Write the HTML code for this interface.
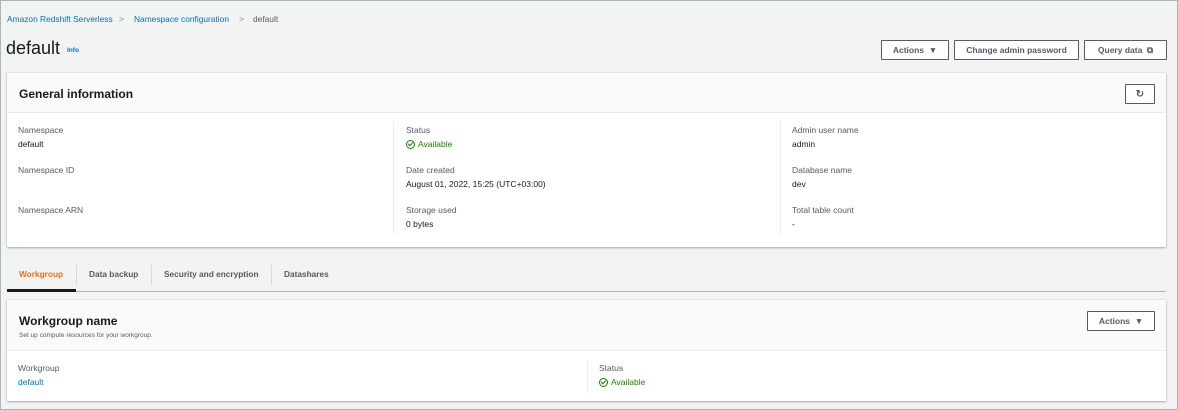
<!DOCTYPE html>
<html><head><style>
*{box-sizing:border-box;margin:0;padding:0}
body{width:1178px;height:410px;background:#f2f3f3;font-family:"Liberation Sans",sans-serif;color:#16191f;position:relative;overflow:hidden}
.frame{position:absolute;left:0;top:0;width:1178px;height:410px;border:1px solid #aab7b8;pointer-events:none}
.a{position:absolute}
.bc{font-size:8.4px;top:14px}
.link{color:#0073bb}
.btn{position:absolute;height:20px;border:1px solid #545b64;background:#fff;font-size:8.5px;font-weight:bold;color:#545b64;display:flex;align-items:center;justify-content:center;border-radius:1px}
.panel{position:absolute;background:#fff;box-shadow:0 1px 2px rgba(0,22,40,.3),0 0 1px rgba(0,22,40,.2)}
.ph{background:#fafafa;border-bottom:1px solid #eaeded}
.lbl{font-size:8.5px;color:#545b64}
.val{font-size:8.5px;color:#16191f}
.val.link{color:#0073bb}
.ok{color:#1d8102;font-size:8.5px;display:flex;align-items:center;gap:3px}
.ok i{width:9px;height:9px;border:1.2px solid #1d8102;border-radius:50%;display:inline-block;position:relative}
.ok i:after{content:"";position:absolute;left:2px;top:0.5px;width:2px;height:4px;border:solid #1d8102;border-width:0 1.2px 1.2px 0;transform:rotate(45deg)}
.div{position:absolute;width:1px;background:#eaeded}
.tab{position:absolute;top:269px;font-size:8.3px;font-weight:bold;color:#545b64}
</style></head><body>
<div class="a bc link" style="left:7px">Amazon Redshift Serverless</div>
<div class="a bc" style="left:119px;color:#879596">&gt;</div>
<div class="a bc link" style="left:134px">Namespace configuration</div>
<div class="a bc" style="left:239px;color:#879596">&gt;</div>
<div class="a bc" style="left:253px;color:#545b64">default</div>
<div class="a" style="left:6px;top:38px;font-size:18px">default</div>
<div class="a link" style="left:67px;top:47px;font-size:6.5px;font-weight:bold">Info</div>
<div class="btn" style="left:881px;top:40px;width:68px">Actions&nbsp;&nbsp;▼</div>
<div class="btn" style="left:954px;top:40px;width:125px">Change admin password</div>
<div class="btn" style="left:1084px;top:40px;width:83px">Query data&nbsp;&nbsp;⧉</div>

<div class="panel" style="left:7px;top:73px;width:1159px;height:174px">
 <div class="ph" style="height:40px"></div>
</div>
<div class="a" style="left:19px;top:87px;font-size:12px;font-weight:bold">General information</div>
<div class="btn" style="left:1125px;top:84px;width:30px;font-size:10px">↻</div>
<div class="div" style="left:393px;top:122px;height:112px"></div>
<div class="div" style="left:780px;top:122px;height:112px"></div>
<div class="a lbl" style="left:18px;top:125px">Namespace</div>
<div class="a val" style="left:18px;top:139px">default</div>
<div class="a lbl" style="left:18px;top:165px">Namespace ID</div>
<div class="a lbl" style="left:18px;top:205px">Namespace ARN</div>
<div class="a lbl" style="left:406px;top:125px">Status</div>
<div class="a ok" style="left:406px;top:139px"><i></i>Available</div>
<div class="a lbl" style="left:406px;top:165px">Date created</div>
<div class="a val" style="left:406px;top:179px">August 01, 2022, 15:25 (UTC+03:00)</div>
<div class="a lbl" style="left:406px;top:205px">Storage used</div>
<div class="a val" style="left:406px;top:219px">0 bytes</div>
<div class="a lbl" style="left:792px;top:125px">Admin user name</div>
<div class="a val" style="left:792px;top:139px">admin</div>
<div class="a lbl" style="left:792px;top:165px">Database name</div>
<div class="a val" style="left:792px;top:179px">dev</div>
<div class="a lbl" style="left:792px;top:205px">Total table count</div>
<div class="a val" style="left:792px;top:219px">-</div>

<div class="a" style="left:7px;top:291px;width:1159px;height:1px;background:#aab7b8"></div>
<div class="a" style="left:7px;top:289px;width:69px;height:3px;background:#16191f"></div>
<div class="tab" style="left:19px;color:#ec7211">Workgroup</div>
<div class="div" style="left:76px;top:265px;height:20px;background:#d5dbdb"></div>
<div class="tab" style="left:89px">Data backup</div>
<div class="div" style="left:151px;top:265px;height:20px;background:#d5dbdb"></div>
<div class="tab" style="left:164px">Security and encryption</div>
<div class="div" style="left:271px;top:265px;height:20px;background:#d5dbdb"></div>
<div class="tab" style="left:284px">Datashares</div>

<div class="panel" style="left:7px;top:300px;width:1159px;height:101px">
 <div class="ph" style="height:51px"></div>
</div>
<div class="a" style="left:19px;top:314px;font-size:12px;font-weight:bold">Workgroup name</div>
<div class="a" style="left:19px;top:332px;font-size:6.5px;color:#545b64">Set up compute resources for your workgroup.</div>
<div class="btn" style="left:1087px;top:311px;width:68px">Actions&nbsp;&nbsp;▼</div>
<div class="div" style="left:587px;top:361px;height:32px"></div>
<div class="a lbl" style="left:18px;top:363px">Workgroup</div>
<div class="a val link" style="left:18px;top:377px">default</div>
<div class="a lbl" style="left:599px;top:363px">Status</div>
<div class="a ok" style="left:599px;top:377px"><i></i>Available</div>
<div class="frame"></div>
</body></html>
